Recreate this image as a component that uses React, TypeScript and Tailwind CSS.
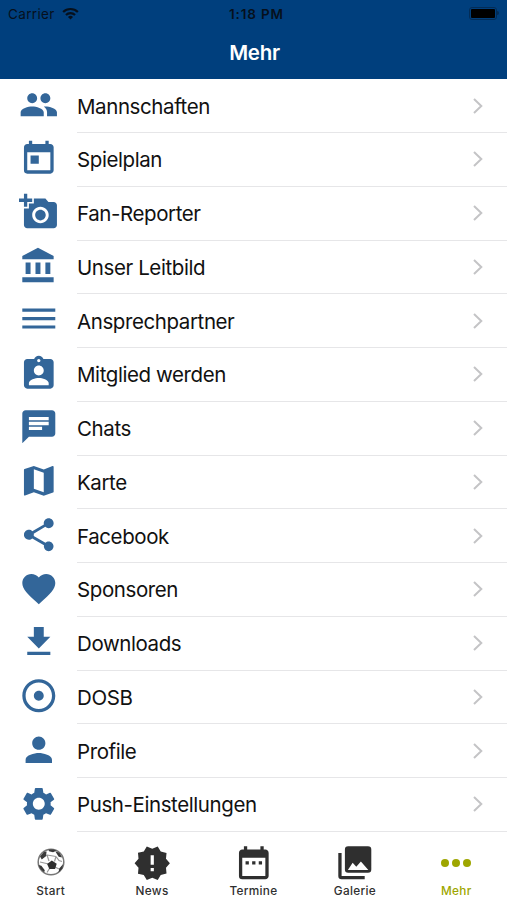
import { MdGroup, MdToday, MdAddAPhoto, MdAssignmentInd, MdChat, MdMap, MdShare, MdFavorite, MdAdjust, MdPerson, MdSettings, MdNewReleases, MdDateRange } from "react-icons/md";

interface IconProps {
    className?: string
}

interface RowProps {
    label: string
    icon: React.ReactNode
}

const BankIcon = ({ className }: IconProps) => (
    <svg viewBox="0 0 24 24" fill="currentColor" className={className}>
        <path d="M4 10v7h3v-7H4zm6 0v7h3v-7h-3zM2 22h19v-3H2v3zm14-12v7h3v-7h-3zm-4.5-9L2 6v2h19V6l-9.5-5z" />
    </svg>
)

const LinesIcon = ({ className }: IconProps) => (
    <svg viewBox="0 0 24 24" fill="currentColor" className={className}>
        <path d="M2 5.2h20v1.9H2zM2 10.3h20v1.9H2zM2 15.4h20v1.9H2z" />
    </svg>
)

const DownloadIcon = ({ className }: IconProps) => (
    <svg viewBox="0 0 24 24" fill="currentColor" className={className}>
        <path d="M19 9h-4V3H9v6H5l7 7 7-7zM5 18v2h14v-2H5z" />
    </svg>
)

const GalleryIcon = ({ className }: IconProps) => (
    <svg viewBox="0 0 24 24" fill="currentColor" className={className}>
        <path fillRule="evenodd" d="M8 2h12a2 2 0 0 1 2 2v12a2 2 0 0 1-2 2H8a2 2 0 0 1-2-2V4a2 2 0 0 1 2-2zM7.8 16.4h12.4l-4.5-5.2-2.8 3.2-2.2-2.4z" />
        <path d="M2 6h2v14h14v2H4a2 2 0 0 1-2-2z" />
    </svg>
)

const DotsIcon = ({ className }: IconProps) => (
    <svg viewBox="0 0 30 8" fill="currentColor" className={className}>
        <circle cx="4" cy="4" r="4" />
        <circle cx="15" cy="4" r="4" />
        <circle cx="26" cy="4" r="4" />
    </svg>
)

const BallIcon = ({ className }: IconProps) => (
    <svg viewBox="0 0 28 28" className={className}>
        <circle cx="14" cy="14" r="12.8" fill="#fff" stroke="#777" strokeWidth="1.5" />
        <path fill="none" stroke="#999" strokeWidth="1.2" d="M10 7l2 6M10 7l9 1.500M19 8.500l-1.500 5M3 14l8.500 2M10 7l-5 3M19 8.500l3 4 3 1M12.500 20.500l-2.500 4M18 19l4 2" />
        <path fill="#2f2f2f" d="M14.8 12.6l4.9 3.100-1.600 5.400h-5.800l-2.200-5.200z" />
        <path fill="#3a3a3a" d="M11.500 1.500h5l3 1.200-3.500 1.600-4-1zM3 8.400L7 3.800l2.600-.4-.6 4.600-4.200 3.600zM18.200 3.200l4.200 1.500 2.800 4.800-3.500-.8zM1.600 17l2.800.8 3.400 4.400-.6 2c-2.800-1.600-4.800-4-5.600-7.200zM26 16.200l-.6 4.400-3.800 3.800.6-4z" />
    </svg>
)

const WifiIcon = ({ className }: IconProps) => (
    <svg viewBox="0 0 18 13" className={className}>
        <path fill="none" stroke="currentColor" strokeWidth="2.3" d="M1.2 4.9a11.2 11.2 0 0 1 15.6 0M4.2 8.1a6.8 6.8 0 0 1 9.6 0" />
        <path fill="currentColor" d="M6.3 10.1a3.9 3.9 0 0 1 5.4 0L9 12.8z" />
    </svg>
)

const iconClass = "w-[39.6px] h-[39.6px]"

const rows: RowProps[] = [
    { label: "Mannschaften", icon: <MdGroup className={iconClass} /> },
    { label: "Spielplan", icon: <MdToday className={iconClass} /> },
    { label: "Fan-Reporter", icon: <MdAddAPhoto className={iconClass} /> },
    { label: "Unser Leitbild", icon: <BankIcon className={iconClass} /> },
    { label: "Ansprechpartner", icon: <LinesIcon className={iconClass} /> },
    { label: "Mitglied werden", icon: <MdAssignmentInd className={iconClass} /> },
    { label: "Chats", icon: <MdChat className={iconClass} /> },
    { label: "Karte", icon: <MdMap className={iconClass} /> },
    { label: "Facebook", icon: <MdShare className={iconClass} /> },
    { label: "Sponsoren", icon: <MdFavorite className={iconClass} /> },
    { label: "Downloads", icon: <DownloadIcon className={iconClass} /> },
    { label: "DOSB", icon: <MdAdjust className={iconClass} /> },
    { label: "Profile", icon: <MdPerson className={iconClass} /> },
    { label: "Push-Einstellungen", icon: <MdSettings className={iconClass} /> },
]

const Row = ({ label, icon }: RowProps) => {
    return (
        <li className="flex h-[53.75px]">
            <div className="w-[77px] pl-[19px] pt-[5.6px] text-[#336699]">{icon}</div>
            <div className="flex-1 flex items-center justify-between border-b border-[#e6e6e8] pr-[24.5px]">
                <span className="pt-[2px] text-[20.5px] leading-6 tracking-[-0.41px] text-[#111] whitespace-nowrap">{label}</span>
                <svg viewBox="0 0 10 16" className="w-[10px] h-[16px]">
                    <path d="M1 1l7.3 7L1 15" fill="none" stroke="#c4c4c6" strokeWidth="2" />
                </svg>
            </div>
        </li>
    )
}

const tabs = [
    { label: "Start", icon: <BallIcon className="w-[28px] h-[28px] mb-[3px]" /> },
    { label: "News", icon: <MdNewReleases className="w-[38.5px] h-[38.5px]" /> },
    { label: "Termine", icon: <MdDateRange className="w-[39.6px] h-[39.6px]" /> },
    { label: "Galerie", icon: <GalleryIcon className="w-[39.6px] h-[39.6px]" /> },
    { label: "Mehr", icon: <DotsIcon className="w-[30px] h-[8px]" />, active: true },
]

const App = () => {
    return (
        <div className="w-[507px] h-[900px] overflow-hidden bg-white flex flex-col font-[Inter,sans-serif]">
            <header className="h-[79.3px] shrink-0 bg-[#003f7d]">
                <div className="h-[28px] px-2 grid grid-cols-3 items-center text-[13.5px] text-[#06101c]">
                    <div className="flex items-center gap-[7px]">
                        <span className="tracking-[0.35px]">Carrier</span>
                        <WifiIcon className="w-[17px] h-[13px] mb-[2px]" />
                    </div>
                    <span className="text-center font-semibold pl-[6px] tracking-[0.85px]">1:18 PM</span>
                    <div className="justify-self-end flex items-center mb-[2px]">
                        <div className="w-[28px] h-[13px] rounded-[3px] border border-[#032c56] p-px">
                            <div className="h-full rounded-[1px] bg-black" />
                        </div>
                        <div className="w-[2px] h-[4px] bg-[#032c56] rounded-r" />
                    </div>
                </div>
                <h1 className="text-center text-white text-[20.5px] leading-[50px] font-semibold tracking-[-0.3px] pl-[2px]">Mehr</h1>
            </header>
            <ul className="shrink-0">
                {rows.map((row) => (
                    <Row key={row.label} {...row} />
                ))}
            </ul>
            <nav className="flex-1 grid grid-cols-5">
                {tabs.map((tab) => (
                    <div key={tab.label} className={`flex flex-col items-center ${tab.active ? "text-[#9ea600]" : "text-[#2f2f2f]"}`}>
                        <div className="h-[40px] mt-[11.4px] flex items-center justify-center">{tab.icon}</div>
                        <span className="text-[11.8px] leading-4 font-medium tracking-[0.3px]">{tab.label}</span>
                    </div>
                ))}
            </nav>
        </div>
    )
}

export default App
